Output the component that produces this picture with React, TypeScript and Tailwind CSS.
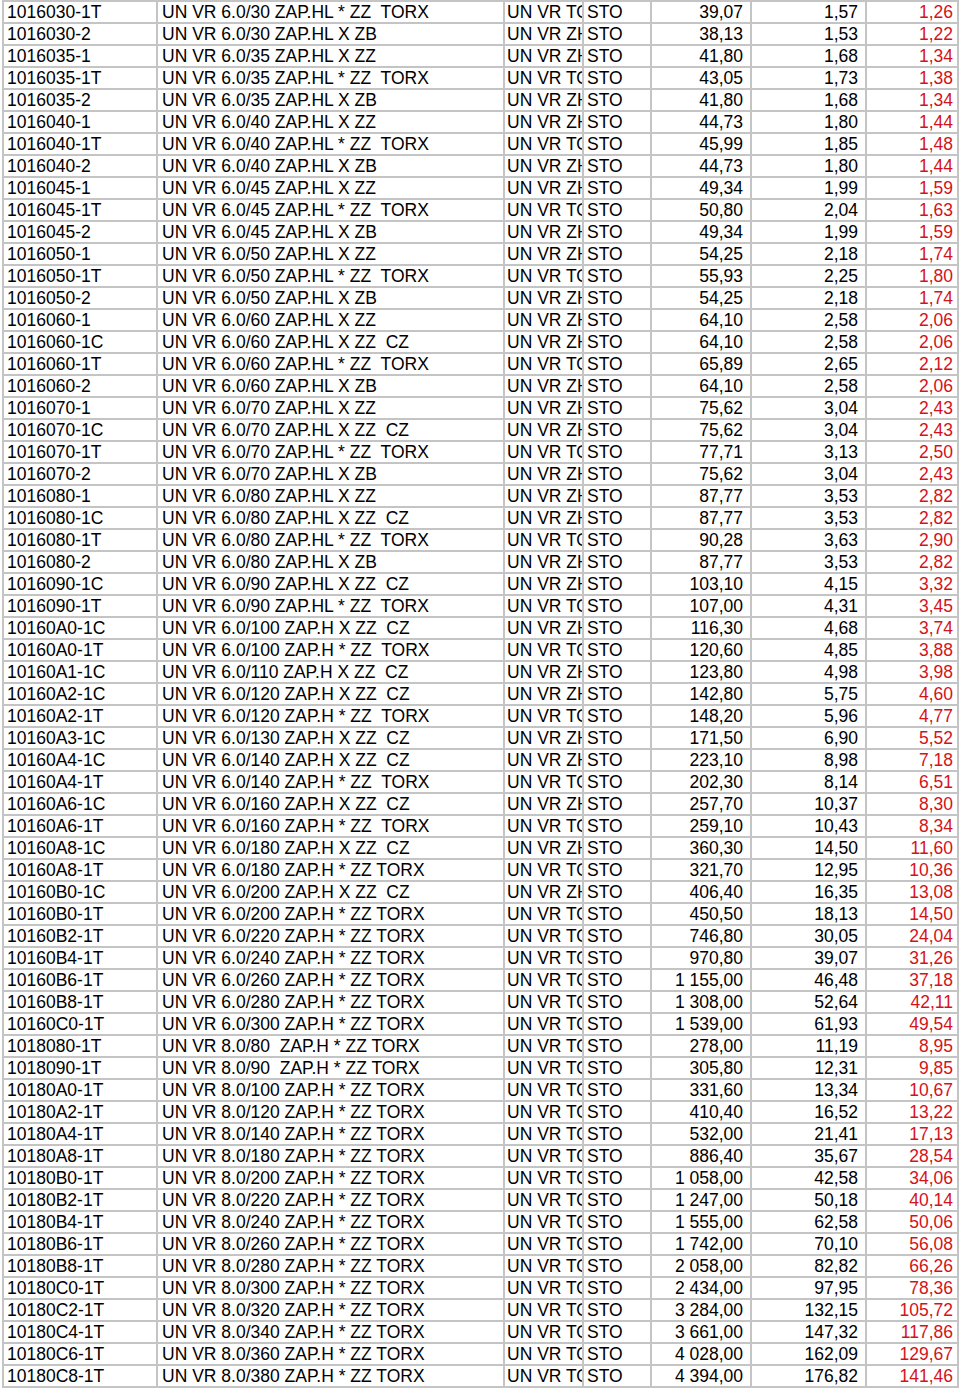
const raw = `1016030-1T|UN VR 6.0/30 ZAP.HL * ZZ  TORX|T|39,07|1,57|1,26
1016030-2|UN VR 6.0/30 ZAP.HL X ZB|Z|38,13|1,53|1,22
1016035-1|UN VR 6.0/35 ZAP.HL X ZZ|Z|41,80|1,68|1,34
1016035-1T|UN VR 6.0/35 ZAP.HL * ZZ  TORX|T|43,05|1,73|1,38
1016035-2|UN VR 6.0/35 ZAP.HL X ZB|Z|41,80|1,68|1,34
1016040-1|UN VR 6.0/40 ZAP.HL X ZZ|Z|44,73|1,80|1,44
1016040-1T|UN VR 6.0/40 ZAP.HL * ZZ  TORX|T|45,99|1,85|1,48
1016040-2|UN VR 6.0/40 ZAP.HL X ZB|Z|44,73|1,80|1,44
1016045-1|UN VR 6.0/45 ZAP.HL X ZZ|Z|49,34|1,99|1,59
1016045-1T|UN VR 6.0/45 ZAP.HL * ZZ  TORX|T|50,80|2,04|1,63
1016045-2|UN VR 6.0/45 ZAP.HL X ZB|Z|49,34|1,99|1,59
1016050-1|UN VR 6.0/50 ZAP.HL X ZZ|Z|54,25|2,18|1,74
1016050-1T|UN VR 6.0/50 ZAP.HL * ZZ  TORX|T|55,93|2,25|1,80
1016050-2|UN VR 6.0/50 ZAP.HL X ZB|Z|54,25|2,18|1,74
1016060-1|UN VR 6.0/60 ZAP.HL X ZZ|Z|64,10|2,58|2,06
1016060-1C|UN VR 6.0/60 ZAP.HL X ZZ  CZ|Z|64,10|2,58|2,06
1016060-1T|UN VR 6.0/60 ZAP.HL * ZZ  TORX|T|65,89|2,65|2,12
1016060-2|UN VR 6.0/60 ZAP.HL X ZB|Z|64,10|2,58|2,06
1016070-1|UN VR 6.0/70 ZAP.HL X ZZ|Z|75,62|3,04|2,43
1016070-1C|UN VR 6.0/70 ZAP.HL X ZZ  CZ|Z|75,62|3,04|2,43
1016070-1T|UN VR 6.0/70 ZAP.HL * ZZ  TORX|T|77,71|3,13|2,50
1016070-2|UN VR 6.0/70 ZAP.HL X ZB|Z|75,62|3,04|2,43
1016080-1|UN VR 6.0/80 ZAP.HL X ZZ|Z|87,77|3,53|2,82
1016080-1C|UN VR 6.0/80 ZAP.HL X ZZ  CZ|Z|87,77|3,53|2,82
1016080-1T|UN VR 6.0/80 ZAP.HL * ZZ  TORX|T|90,28|3,63|2,90
1016080-2|UN VR 6.0/80 ZAP.HL X ZB|Z|87,77|3,53|2,82
1016090-1C|UN VR 6.0/90 ZAP.HL X ZZ  CZ|Z|103,10|4,15|3,32
1016090-1T|UN VR 6.0/90 ZAP.HL * ZZ  TORX|T|107,00|4,31|3,45
10160A0-1C|UN VR 6.0/100 ZAP.H X ZZ  CZ|Z|116,30|4,68|3,74
10160A0-1T|UN VR 6.0/100 ZAP.H * ZZ  TORX|T|120,60|4,85|3,88
10160A1-1C|UN VR 6.0/110 ZAP.H X ZZ  CZ|Z|123,80|4,98|3,98
10160A2-1C|UN VR 6.0/120 ZAP.H X ZZ  CZ|Z|142,80|5,75|4,60
10160A2-1T|UN VR 6.0/120 ZAP.H * ZZ  TORX|T|148,20|5,96|4,77
10160A3-1C|UN VR 6.0/130 ZAP.H X ZZ  CZ|Z|171,50|6,90|5,52
10160A4-1C|UN VR 6.0/140 ZAP.H X ZZ  CZ|Z|223,10|8,98|7,18
10160A4-1T|UN VR 6.0/140 ZAP.H * ZZ  TORX|T|202,30|8,14|6,51
10160A6-1C|UN VR 6.0/160 ZAP.H X ZZ  CZ|Z|257,70|10,37|8,30
10160A6-1T|UN VR 6.0/160 ZAP.H * ZZ  TORX|T|259,10|10,43|8,34
10160A8-1C|UN VR 6.0/180 ZAP.H X ZZ  CZ|Z|360,30|14,50|11,60
10160A8-1T|UN VR 6.0/180 ZAP.H * ZZ TORX|T|321,70|12,95|10,36
10160B0-1C|UN VR 6.0/200 ZAP.H X ZZ  CZ|Z|406,40|16,35|13,08
10160B0-1T|UN VR 6.0/200 ZAP.H * ZZ TORX|T|450,50|18,13|14,50
10160B2-1T|UN VR 6.0/220 ZAP.H * ZZ TORX|T|746,80|30,05|24,04
10160B4-1T|UN VR 6.0/240 ZAP.H * ZZ TORX|T|970,80|39,07|31,26
10160B6-1T|UN VR 6.0/260 ZAP.H * ZZ TORX|T|1 155,00|46,48|37,18
10160B8-1T|UN VR 6.0/280 ZAP.H * ZZ TORX|T|1 308,00|52,64|42,11
10160C0-1T|UN VR 6.0/300 ZAP.H * ZZ TORX|T|1 539,00|61,93|49,54
1018080-1T|UN VR 8.0/80  ZAP.H * ZZ TORX|T|278,00|11,19|8,95
1018090-1T|UN VR 8.0/90  ZAP.H * ZZ TORX|T|305,80|12,31|9,85
10180A0-1T|UN VR 8.0/100 ZAP.H * ZZ TORX|T|331,60|13,34|10,67
10180A2-1T|UN VR 8.0/120 ZAP.H * ZZ TORX|T|410,40|16,52|13,22
10180A4-1T|UN VR 8.0/140 ZAP.H * ZZ TORX|T|532,00|21,41|17,13
10180A8-1T|UN VR 8.0/180 ZAP.H * ZZ TORX|T|886,40|35,67|28,54
10180B0-1T|UN VR 8.0/200 ZAP.H * ZZ TORX|T|1 058,00|42,58|34,06
10180B2-1T|UN VR 8.0/220 ZAP.H * ZZ TORX|T|1 247,00|50,18|40,14
10180B4-1T|UN VR 8.0/240 ZAP.H * ZZ TORX|T|1 555,00|62,58|50,06
10180B6-1T|UN VR 8.0/260 ZAP.H * ZZ TORX|T|1 742,00|70,10|56,08
10180B8-1T|UN VR 8.0/280 ZAP.H * ZZ TORX|T|2 058,00|82,82|66,26
10180C0-1T|UN VR 8.0/300 ZAP.H * ZZ TORX|T|2 434,00|97,95|78,36
10180C2-1T|UN VR 8.0/320 ZAP.H * ZZ TORX|T|3 284,00|132,15|105,72
10180C4-1T|UN VR 8.0/340 ZAP.H * ZZ TORX|T|3 661,00|147,32|117,86
10180C6-1T|UN VR 8.0/360 ZAP.H * ZZ TORX|T|4 028,00|162,09|129,67
10180C8-1T|UN VR 8.0/380 ZAP.H * ZZ TORX|T|4 394,00|176,82|141,46`

const rows = raw.split('\n').map((line) => line.split('|'))

const cell =
    'h-[22px] border-r-2 border-b-2 border-[#c4c4c4] overflow-hidden whitespace-pre leading-[20px]'

export default function App() {
    return (
        <div
            className="bg-white text-black text-[17.5px] pl-[2px]"
            style={{ fontFamily: '"Liberation Sans", Arial, sans-serif' }}
        >
            <div className="grid grid-cols-[154px_347px_79px_68px_100px_115px_92px] w-[957px] border-l-2 border-t-2 border-[#c4c4c4]">
                {rows.map(([code, name, kind, price, a, b]) => (
                    <div key={code} className="contents">
                        <div className={`${cell} pl-[3px]`}>{code}</div>
                        <div className={`${cell} pl-[4px]`}>{name}</div>
                        <div className={`${cell} pl-[2px]`}>
                            {kind === 'T' ? 'UN VR TORX' : 'UN VR ZHL'}
                        </div>
                        <div className={`${cell} pl-[3px]`}>STO</div>
                        <div className={`${cell} text-right pr-[7px]`}>{price}</div>
                        <div className={`${cell} text-right pr-[7px]`}>{a}</div>
                        <div className={`${cell} text-right pr-[4px] text-[#d4121a]`}>{b}</div>
                    </div>
                ))}
            </div>
        </div>
    )
}
